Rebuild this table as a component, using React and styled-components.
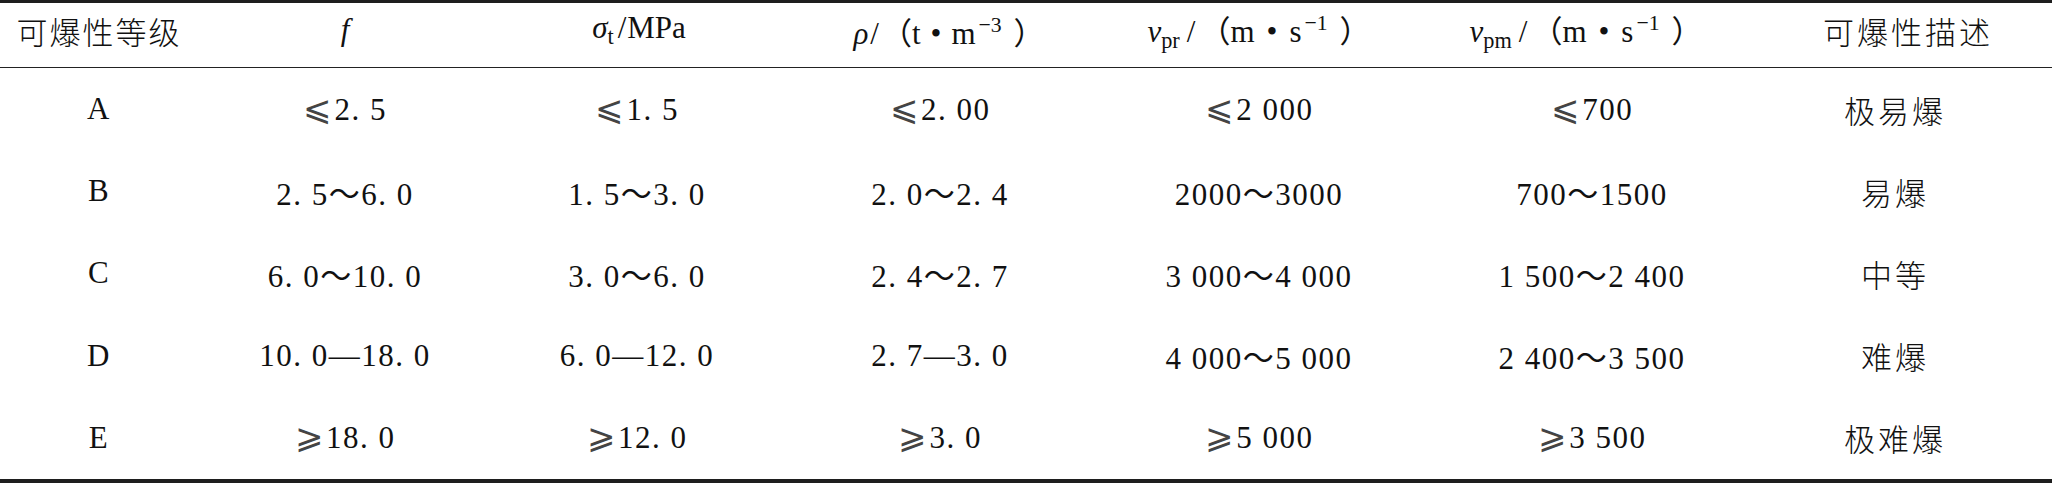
import React from "react";
import styled, { createGlobalStyle } from "styled-components";

const GlobalStyle = createGlobalStyle`
	body {
		margin: 0;
		background: #fff;
	}
`;

const COLS = "198px 294px 290px 316px 322px 344px 288px";

const Table = styled.div`
	width: 2052px;
	border-top: 3px solid #1e1e1e;
	border-bottom: 4px solid #1e1e1e;
	color: #111;
	font-family: "Liberation Serif", "DejaVu Serif", "Noto Sans CJK SC", serif;
`;

const Row = styled.div`
	display: grid;
	grid-template-columns: ${COLS};
	align-items: center;
	box-sizing: border-box;
	height: ${(p) => (p.$head ? "65px" : "82.2px")};
	padding-bottom: ${(p) => (p.$head ? "10px" : "0")};
	border-bottom: ${(p) => (p.$head ? "1px solid #222" : "none")};
`;

const Cell = styled.div`
	text-align: center;
	white-space: nowrap;
	font-size: 31px;
	letter-spacing: ${(p) => (p.$ls === undefined ? 1.5 : p.$ls)}px;
	padding-left: ${(p) => p.$pl || 0}px;
	padding-right: ${(p) => p.$pr || 0}px;
	font-family: ${(p) =>
		p.$cjk
			? '"Noto Sans CJK SC", sans-serif'
			: '"Liberation Serif", "DejaVu Serif", "Noto Sans CJK SC", serif'};
	${(p) => p.$cjk && "font-weight: 300;"}
`;

const Rel = styled.span`
	font-family: "DejaVu Serif", serif;
	font-size: 1.1em;
	line-height: 1;
	color: #444;
	margin-right: 2px;
`;

const I = styled.i`
	font-style: italic;
`;

const Sub = styled.sub`
	font-size: 0.72em;
	vertical-align: -0.25em;
	margin-right: 3px;
`;

const Sup = styled.sup`
	font-size: 0.7em;
	vertical-align: 0.55em;
	margin-left: 3px;
	margin-right: 12px;
`;

const Gap = styled.span`
	margin: 0 ${(p) => p.$w || 4}px;
`;

const rows = [
	["A", "⩽2. 5", "⩽1. 5", "⩽2. 00", "⩽2 000", "⩽700", "极易爆"],
	["B", "2. 5～6. 0", "1. 5～3. 0", "2. 0～2. 4", "2000～3000", "700～1500", "易爆"],
	["C", "6. 0～10. 0", "3. 0～6. 0", "2. 4～2. 7", "3 000～4 000", "1 500～2 400", "中等"],
	["D", "10. 0—18. 0", "6. 0—12. 0", "2. 7—3. 0", "4 000～5 000", "2 400～3 500", "难爆"],
	["E", "⩾18. 0", "⩾12. 0", "⩾3. 0", "⩾5 000", "⩾3 500", "极难爆"],
];

const renderValue = (v) => {
	if (v[0] === "⩽" || v[0] === "⩾") {
		return (
			<>
				<Rel>{v[0]}</Rel>
				{v.slice(1)}
			</>
		);
	}
	return v;
};

const Unit = ({ sym, sub, a, b, exp, pl, pr }) => (
	<Cell $ls={0} $pl={pl} $pr={pr}>
		<I>{sym}</I>
		{sub && <Sub>{sub}</Sub>}
		<Gap $w={sub ? 4 : 2}>/</Gap>（{a}
		<Gap $w={sub ? 12 : 10}>•</Gap>
		{b}
		<Sup>{exp}</Sup>）
	</Cell>
);

export default function App() {
	return (
		<>
			<GlobalStyle />
			<Table>
				<Row $head>
					<Cell $cjk $ls={2}>
						可爆性等级
					</Cell>
					<Cell $ls={0}>
						<I>f</I>
					</Cell>
					<Cell $ls={0} $pl={4}>
						<I>σ</I>
						<Sub>t</Sub>
						<Gap $w={1}>/</Gap>MPa
					</Cell>
					<Unit sym="ρ" a="t" b="m" exp="−3" pl={18} />
					<Unit sym="v" sub="pr" a="m" b="s" exp="−1" />
					<Unit sym="v" sub="pm" a="m" b="s" exp="−1" pr={12} />
					<Cell $cjk $ls={3}>
						可爆性描述
					</Cell>
				</Row>
				{rows.map((r, i) => (
					<Row key={i}>
						{r.map((c, j) =>
							j === 6 ? (
								<Cell key={j} $cjk $ls={3} $pr={26}>
									{c}
								</Cell>
							) : (
								<Cell key={j}>{renderValue(c)}</Cell>
							)
						)}
					</Row>
				))}
			</Table>
		</>
	);
}
